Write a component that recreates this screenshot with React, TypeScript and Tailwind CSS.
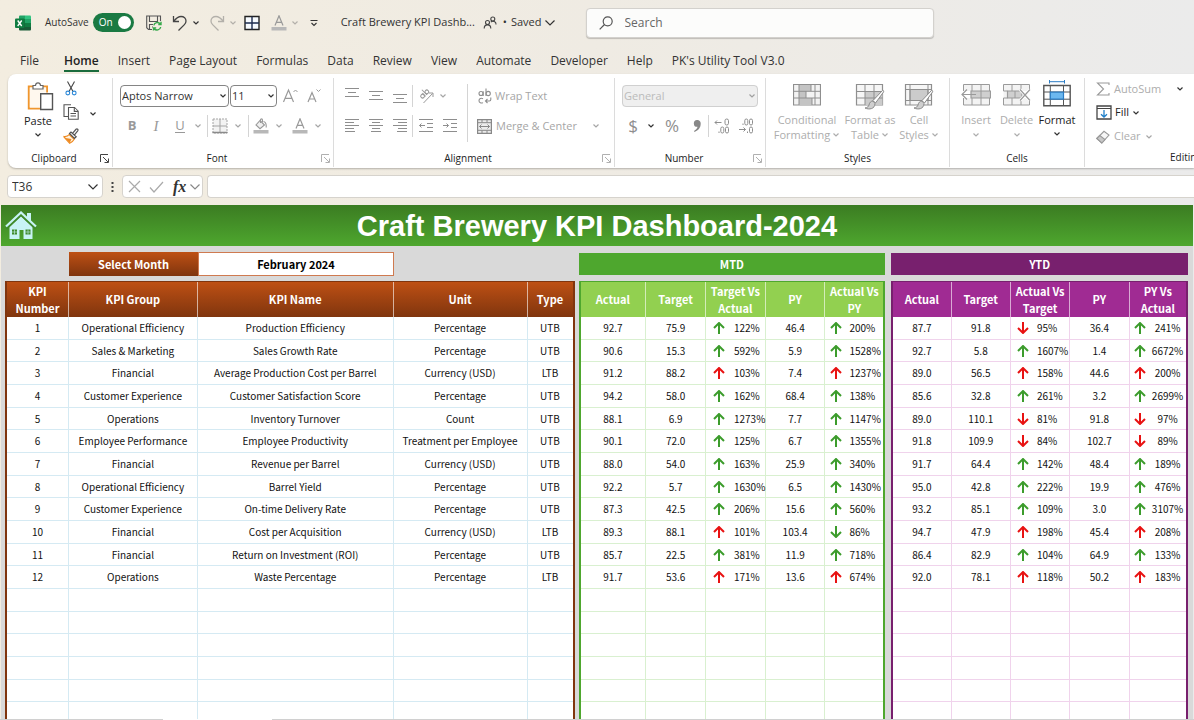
import React from 'react';

type Svg = { className?: string };

const Chevron = ({ className = 'text-[#333]' }: Svg) => (
  <svg viewBox="0 0 8 6" className={`h-[6px] w-[8px] shrink-0 ${className}`} fill="none" stroke="currentColor" strokeWidth="1.2">
    <path d="M1.5 1.5 4 4 6.5 1.5" />
  </svg>
);

const WideChevron = ({ className = 'text-[#333]' }: Svg) => (
  <svg viewBox="0 0 12 8" className={`h-[8px] w-[12px] shrink-0 ${className}`} fill="none" stroke="currentColor" strokeWidth="1.2">
    <path d="M1.5 1.5 6 6 10.5 1.5" />
  </svg>
);

const Divider = ({ className = 'h-[22px]' }: Svg) => <span className={`w-px shrink-0 bg-[#d4d4d4] ${className}`} />;

const Launcher = ({ className = 'text-[#b0b0b0]' }: Svg) => (
  <svg viewBox="0 0 9 9" className={`h-[9px] w-[9px] ${className}`} fill="none" stroke="currentColor" strokeWidth="1">
    <path d="M.5 8V.5H8M3 3l5 5M8.5 4.5v4h-4" />
  </svg>
);

/* ---------- icons ---------- */

const ExcelLogo = () => (
  <svg viewBox="0 0 16 16" className="h-[16px] w-[16px]">
    <path d="M5 .5h5V8H4V1.5a1 1 0 0 1 1-1z" fill="#21a366" />
    <path d="M10 .5h5a1 1 0 0 1 1 1V4h-6z" fill="#33c481" />
    <path d="M4 4h6v4H4z" fill="#107c41" />
    <path d="M10 4h6v4h-6z" fill="#21a366" />
    <path d="M4 8h6v4H4z" fill="#185c37" />
    <path d="M10 8h6v4h-6z" fill="#107c41" />
    <path d="M4 12h12v2.5a1 1 0 0 1-1 1H5a1 1 0 0 1-1-1z" fill="#185c37" />
    <rect x="0" y="3.5" width="9.5" height="9.5" rx="1" fill="#107c41" />
    <path d="m2.7 5.5 4 5.500M6.7 5.5l-4 5.5" stroke="#fff" strokeWidth="1.4" />
  </svg>
);

const SaveIcon = () => (
  <svg viewBox="0 0 16 16" className="h-[16px] w-[16px]" fill="none" strokeWidth="1.1">
    <path d="M6 14.5H2.5L.7 12.7V1h13.800v5M3.5 1v5.5h8V1M3.5 14.5v-5H7M6 12h1" stroke="#555" />
    <path d="M7.800 10.300a3.600 3.600 0 0 1 6.500-1.200M15 6.800v2.700h-2.700M14.700 12a3.600 3.600 0 0 1-6.500 1.500M7.500 15.500v-2.600h2.700" stroke="#35a84a" strokeWidth="1.4" />
  </svg>
);

const UndoIcon = ({ className }: Svg) => (
  <svg viewBox="0 0 16 16" className={`h-[16px] w-[16px] ${className}`} fill="none" stroke="currentColor" strokeWidth="1.3">
    <path d="M1.5 1v5.5H7M1.8 6.2C4 3.5 6 1.5 9 1.5c3 0 5 2 5 4.5 0 1.5-.6 2.6-1.6 3.600L6.500 15.500" />
  </svg>
);

const GridIcon = () => (
  <svg viewBox="0 0 16 16" className="h-[16px] w-[16px]" fill="none" stroke="#222" strokeWidth="1.4">
    <path d="M1 1.5h14v13H1z" fill="#f7fbff" />
    <path d="M8 1.5v13M1 8h14" stroke="#1d2c4f" />
  </svg>
);

const FontColorIcon = () => (
  <svg viewBox="0 0 16 16" className="h-[16px] w-[16px]" fill="none" stroke="#999" strokeWidth="1.2">
    <path d="M4 10.500 8 .8l4 9.700M5.300 7.300h5.400" />
    <path d="M.5 12h15v3.500H.5z" fill="#b8b8b8" stroke="none" />
  </svg>
);

const PeopleIcon = () => (
  <svg viewBox="0 0 14 14" className="h-[14px] w-[14px]" fill="none" stroke="#444" strokeWidth="1.1">
    <circle cx="4.5" cy="6.5" r="2" />
    <path d="M1.200 12.500c0-2.500 1.300-3.600 3.300-3.600s3.300 1.100 3.300 3.600" />
    <circle cx="9.8" cy="3" r="2" />
    <path d="M7.800 6.200c.6-.6 1.200-.9 2-.9 2 0 3.200 1.200 3.200 3.200" />
  </svg>
);

const SearchIcon = () => (
  <svg viewBox="0 0 14 14" className="h-[14px] w-[14px] shrink-0" fill="none" stroke="#555" strokeWidth="1.2">
    <circle cx="8.7" cy="5.3" r="4.5" />
    <path d="M5.500 8.500.7 13.300" />
  </svg>
);

const PasteIcon = () => (
  <svg viewBox="0 0 27 29" className="h-[29px] w-[27px]" fill="none">
    <path d="M7 4.500H1.800v22h11.500M14 4.500h6v6" stroke="#f0962d" strokeWidth="2" />
    <path d="M2.800 5.500h16.400v5h-6v15H2.800z" fill="#fff8ee" />
    <path d="M6 7V3.500h2.500C8.700 1.500 9.500.8 11 .8s2.300.7 2.500 2.700H16V7z" fill="#fff" stroke="#666" strokeWidth="1.2" />
    <path d="M13.700 11.700h11.800v15.800H13.700z" fill="#fff" stroke="#555" strokeWidth="1.4" />
  </svg>
);

const CutIcon = () => (
  <svg viewBox="0 0 14 15" className="h-[15px] w-[14px]" fill="none" strokeWidth="1.1">
    <path d="M3.500.5 9 10.500M10.500.5 5 10.500" stroke="#444" />
    <circle cx="3.8" cy="12" r="1.9" stroke="#2b88d8" />
    <circle cx="10.2" cy="12" r="1.9" stroke="#2b88d8" />
  </svg>
);

const CopyIcon = () => (
  <svg viewBox="0 0 16 16" className="h-[16px] w-[16px]" fill="#fff" stroke="#555" strokeWidth="1.1">
    <path d="M8 .8H1v11.700h4" />
    <path d="M5.500 3.500h6l3.700 3.700v8H5.500z" />
    <path d="M11.300 3.700v3.700H15M7.500 9.500h5.500M7.500 12h5.500" />
  </svg>
);

const PainterIcon = () => (
  <svg viewBox="0 0 16 16" className="h-[16px] w-[16px]" fill="none" strokeWidth="1.2">
    <path d="M1 8.500c2.500.3 4-.5 5.200-2l5 4.700c-1.200 2-2.400 3.300-4.500 4.100L1 9z" fill="#fff3e0" stroke="#ee8a22" />
    <path d="m2.500 10 6 1-1.800 4z" fill="#ee8a22" />
    <path d="m6.500 5.500 1.500-1.500 5.200 4.800-1.700 1.700zM9.500 5.300l3.500-4c1.300-1 2.500.4 1.700 1.500l-3.200 4" fill="#fff" stroke="#555" />
  </svg>
);

const GrowFont = ({ down = false }: { down?: boolean }) => (
  <svg viewBox="0 0 17 16" className="h-[16px] w-[17px]" fill="none" stroke="#9a9a9a" strokeWidth="1.2">
    <path d={down ? 'M2 14 6 4.500l4 9.500M3.400 11h5.300' : 'M1.500 14 6.500 2l5 12M3.200 10.300h6.600'} />
    <path d={down ? 'm10.500 1.500 2 2 2-2' : 'm11.500 4 2-2 2 2'} strokeWidth="1" />
  </svg>
);

const BorderIcon = () => (
  <svg viewBox="0 0 16 16" className="h-[16px] w-[16px]" fill="none" stroke="#a5a5a5">
    <path d="M1 1h14v14H1z" fill="#f3f3f3" strokeDasharray="2 1" />
    <path d="M8 1v13M1 8h14" />
    <path d="M.5 14.500h15" stroke="#8a8a8a" strokeWidth="1.5" />
  </svg>
);

const FillColorIcon = () => (
  <svg viewBox="0 0 16 16" className="h-[16px] w-[16px]" fill="none" stroke="#999" strokeWidth="1.1">
    <path d="m7 2.500 4.500 4.500-4.500 3.700L3 7z" fill="#f0f0f0" />
    <path d="M7.500 5V2c0-1.500 2-1.500 2 0v2M10.500 3.500c2.300.5 3 2.500 2.700 6" />
    <path d="M.5 12h15v3.500H.5z" fill="#b8b8b8" stroke="none" />
  </svg>
);

const Lines = ({ rows }: { rows: [number, number, number][] }) => (
  <svg viewBox="0 0 14 16" className="h-[16px] w-[14px]" stroke="#8e8e8e" strokeWidth="1">
    {rows.map(([y, a, b]) => (
      <path key={y} d={`M${a} ${y + 0.5}H${b}`} />
    ))}
  </svg>
);

const OrientIcon = () => (
  <svg viewBox="0 0 16 16" className="h-[16px] w-[16px]" fill="none" stroke="#999" strokeWidth="1">
    <path d="M5.500 15 14.500 5.500M11 5h4v4" />
    <g transform="rotate(-45 6 6)">
      <circle cx="3.5" cy="6.5" r="1.9" />
      <path d="M5.500 4.300v4.500M7.500 1.500v7.300" />
      <circle cx="9.5" cy="6.5" r="1.9" />
    </g>
  </svg>
);

const IndentIcon = ({ right = false }: { right?: boolean }) => (
  <svg viewBox="0 0 14 16" className="h-[16px] w-[14px]" fill="none" stroke="#8e8e8e" strokeWidth="1">
    <path d="M0 1.500h14M8 5.500h6M8 9.500h6M0 13.500h14" />
    <path d={right ? 'M0 7.500h5.500M3.500 5.500l2 2-2 2' : 'M.5 7.500H6M2.500 5.500l-2 2 2 2'} />
  </svg>
);

const WrapIcon = () => (
  <svg viewBox="0 0 14 16" className="h-[16px] w-[14px]" fill="none" stroke="#8e8e8e" strokeWidth="1.1">
    <circle cx="3" cy="5.5" r="2" />
    <path d="M5.200 3.300V8M8 .5V8" />
    <circle cx="10.2" cy="5.5" r="2.1" />
    <path d="M5 10.800c-1.800-1.200-4 0-4 1.900s2.200 3 4 1.900M12.800 9.500v2c0 1-.5 1.500-1.500 1.500H7.500M9.500 11l-2 2 2 2" />
  </svg>
);

const MergeIcon = () => (
  <svg viewBox="0 0 15 15" className="h-[15px] w-[15px]" fill="none" stroke="#888" strokeWidth="1.2">
    <path d="M.6.6h13.800v13.800H.6z" fill="#ececec" />
    <path d="M1 3.700h13M1 11.300h13M5 .5v3M10 .5v3M5 11.500v3M10 11.500v3" strokeWidth="1" />
    <path d="M2.500 7.500h10M4.500 5.500l-2 2 2 2M10.500 5.500l2 2-2 2" strokeWidth="1" />
  </svg>
);

const DecimalIcon = ({ more = false }: { more?: boolean }) => (
  <svg viewBox="0 0 16 16" className="h-[16px] w-[16px]" fill="none" stroke="#8e8e8e" strokeWidth="1">
    {more ? (
      <>
        <path d="M1 4.500h6.500M3 2.500l-2 2 2 2M5 13.500v1.500" />
        <rect x="11" y="1" width="3.5" height="6" rx="1.7" />
        <rect x="6.8" y="9" width="3" height="6" rx="1.5" />
        <rect x="11.5" y="9" width="3" height="6" rx="1.5" />
      </>
    ) : (
      <>
        <path d="M1 11.500h6.500M5.500 9.500l2 2-2 2M5 5.500V7" />
        <rect x="6.8" y="1" width="3" height="6" rx="1.5" />
        <rect x="11.5" y="1" width="3" height="6" rx="1.5" />
        <rect x="11.5" y="9" width="3" height="6" rx="1.5" />
        <path d="M9.500 13.500V15" />
      </>
    )}
  </svg>
);

const BrushStroke = () => (
  <>
    <path d="M27.500 6.500 18 16.500l2.500 2.500L28.500 8c.6-1-.2-2-1-1.500z" fill="#fff" stroke="#8a8a8a" />
    <path d="M18 17c-2 0-3.500 1.500-4 4-.3 1.500-1.500 2.500-4 3 4 2 10 1 10-4.500z" fill="#cfcfcf" stroke="#8a8a8a" />
  </>
);

const ConditionalIcon = () => (
  <svg viewBox="0 0 28 22" className="h-[22px] w-[28px]" fill="none" stroke="#8f8f8f">
    <path d="M.5.5h27v20.500H.5z" fill="#f3f3f3" strokeWidth="1.2" />
    <path d="M6 1h12v6H6zM6 7h7v7H6zM6 14h13v7H6z" fill="#c4c4c4" stroke="none" />
    <path d="M1 7.300h26M1 14h26M6 1v20M22 1v20M18 1v6M13 7v7M19 14v7" />
  </svg>
);

const FormatTableIcon = () => (
  <svg viewBox="0 0 30 26" className="h-[26px] w-[30px]" fill="none" stroke="#8f8f8f">
    <path d="M1.500.5h26v20.500h-26z" fill="#f6f6f6" strokeWidth="1.2" />
    <path d="M10 7.500h17.500V21H10z" fill="#cbcbcb" stroke="none" />
    <path d="M1.500 7.500h26M1.500 14h26M10 .5V21M19 .5V21" />
    <BrushStroke />
  </svg>
);

const CellStylesIcon = () => (
  <svg viewBox="0 0 30 26" className="h-[26px] w-[30px]" fill="none" stroke="#8f8f8f">
    <path d="M1.500.5h26v20.500h-26z" fill="#f6f6f6" strokeWidth="1.2" />
    <path d="M6 5.500h18v11H6z" fill="#cbcbcb" />
    <path d="M1.500 5.500h26M1.500 16.500h26M6 .5V21M24 .5V21" />
    <BrushStroke />
  </svg>
);

const InsertIcon = () => (
  <svg viewBox="0 0 30 22" className="h-[22px] w-[30px]" fill="none" stroke="#9a9a9a">
    <path d="M2.500 7V.5h26V7M2.500 14v7h26v-7M11 .5V7M20 .5V7M11 14v7M20 14v7" fill="#f3f3f3" />
    <path d="M10 7h19.500v7H10z" fill="#cfcfcf" strokeWidth="1.2" />
    <path d="M20 7v7" />
    <path d="M1 10.500h14M6 5.500l-5 5 5 5" strokeWidth="1.2" />
  </svg>
);

const DeleteIcon = () => (
  <svg viewBox="0 0 30 22" className="h-[22px] w-[30px]" fill="none" stroke="#9a9a9a">
    <path d="M1.500 7V.5h26V7M1.500 14v7h26v-7M10 .5V7M19 .5V7M10 14v7M19 14v7M1.500 7h4v7h-4" fill="#f3f3f3" />
    <path d="M5.500 7H20v7H5.500z" fill="#cfcfcf" strokeWidth="1.2" />
    <path d="M13 7v7" />
    <path d="m18 5.500 10 11M28 5.500l-10 11" stroke="#fff" strokeWidth="3" />
    <path d="m18 5.500 10 11M28 5.500l-10 11" strokeWidth="1.2" />
  </svg>
);

const FormatIcon = () => (
  <svg viewBox="0 0 28 27" className="h-[27px] w-[28px]" fill="none" stroke="#555">
    <path d="M6.500 0v3.500M21.500 0v3.500M6.500 1.700h15" stroke="#2b7cc4" />
    <path d="M.8 5.500h26.400v20.300H.8z" fill="#fff" strokeWidth="1.4" />
    <path d="M1 12h26M1 19.200h26M7.300 6v20M20.500 6v20" />
    <path d="M7.300 12.200h13.200v6.900H7.300z" fill="#6cb8f0" stroke="#2b7cc4" strokeWidth="1.2" />
  </svg>
);

const SumIcon = () => (
  <svg viewBox="0 0 14 14" className="h-[14px] w-[14px]" fill="none" stroke="#999" strokeWidth="1.1">
    <path d="M13 3V1H1.500l6 6-6 6H13v-2" />
  </svg>
);

const FillIcon = () => (
  <svg viewBox="0 0 16 15" className="h-[15px] w-[16px]" fill="none" stroke="#444" strokeWidth="1.3">
    <path d="M1 1h14v13H1z" />
    <path d="M1 3.500h14" strokeWidth="1" />
    <path d="M8 5v7M5 9.200 8 12l3-2.800" stroke="#1f7fc9" />
  </svg>
);

const ClearIcon = () => (
  <svg viewBox="0 0 14 14" className="h-[14px] w-[14px]" fill="none" stroke="#999" strokeWidth="1.1">
    <path d="M.8 8.500 8 1.300 13 5 5.800 13z" fill="#f6f6f6" />
    <path d="m.8 8.500 3-3L9 9.500 5.800 13z" fill="#c8c8c8" />
  </svg>
);

const HomeIcon = () => (
  <svg viewBox="0 0 32 29" className="h-[29px] w-[32px]">
    <path d="M26 2v10l-4-4V2z" fill="#c8f3f5" />
    <path d="M16 5 27.500 16v12h-9v-9h-4v9h-10V16z" fill="#c8f3f5" />
    <path d="M7 18.500h5v5H7zM20.500 18.500h5v5h-5z" fill="#3f8a2a" />
    <path d="M9.500 18.500v5M7 21h5M23 18.500v5M20.500 21h5" stroke="#c8f3f5" strokeWidth=".6" />
    <path d="M1 17.500 16 3.500l15 14" fill="none" stroke="#3f8a2a" strokeWidth="3" />
    <path d="M1 15.500 16 1.500l15 14" fill="none" stroke="#c8f3f5" strokeWidth="2.2" />
  </svg>
);

const TrendArrow = ({ down, bad }: { down: boolean; bad: boolean }) => (
  <svg
    viewBox="0 0 12 12"
    role="img"
    aria-label={down ? 'down' : 'up'}
    className={`h-[12px] w-[12px] shrink-0 ${bad ? 'text-[#e81212]' : 'text-[#3c9c2c]'}`}
    fill="none"
    stroke="currentColor"
    strokeWidth="2"
  >
    <path d={down ? 'M6 0v11M1 6l5 5 5-5' : 'M6 12V1M1 6l5-5 5 5'} />
  </svg>
);

/* ---------- ribbon ---------- */

const Group = ({
  label,
  width,
  launcher,
  children,
}: {
  label: string;
  width: string;
  launcher?: 'on' | 'off';
  children: React.ReactNode;
}) => (
  <section aria-label={label} className={`flex shrink-0 flex-col pt-1 ${width}`}>
    <div className="flex flex-1 flex-col border-r border-[#dcdcdc]">
      <div className="h-[71px]">{children}</div>
      <div className="flex h-[18px] items-center text-[10px] text-[#222]">
        <span className="flex-1 text-center">{label}</span>
        {launcher && (
          <button aria-label={`${label} settings`} className="mr-[3px]">
            <Launcher className={launcher === 'on' ? 'text-[#444]' : 'text-[#b0b0b0]'} />
          </button>
        )}
      </div>
    </div>
  </section>
);

const Combo = ({ label, value, box, arrow }: { label: string; value: string; box: string; arrow: string }) => (
  <div className={`relative h-[22px] ${box}`}>
    <select
      aria-label={label}
      defaultValue={value}
      className="block h-full w-full appearance-none rounded-[4px] border border-current/60 bg-transparent pl-px text-[11px]"
    >
      <option>{value}</option>
    </select>
    <span className="pointer-events-none absolute inset-y-0 right-[2px] flex items-center">
      <Chevron className={arrow} />
    </span>
  </div>
);

const IconButton = ({ label, w = 'w-[24px]', children }: { label: string; w?: string; children: React.ReactNode }) => (
  <button aria-label={label} className={`flex h-[24px] shrink-0 items-center justify-center ${w}`}>
    {children}
  </button>
);

const BigButton = ({
  icon,
  lines,
  w,
  on = false,
  inline = false,
}: {
  icon: React.ReactNode;
  lines: string[];
  w: string;
  on?: boolean;
  inline?: boolean;
}) => (
  <button className={`flex h-full flex-col items-center text-[11px] ${w} ${on ? 'text-[#222]' : 'text-[#adadad]'}`}>
    <span className={`flex h-[33px] justify-center ${on ? 'pt-[2px]' : 'pt-[6px]'}`}>{icon}</span>
    {inline ? (
      <>
        <span className="mt-px leading-[15px]">{lines[0]}</span>
        <span className="flex items-center gap-[2px] leading-[15px] whitespace-nowrap">
          {lines[1]}
          <Chevron className="text-[#adadad]" />
        </span>
      </>
    ) : (
      <>
        <span className="mt-px leading-[16px]">{lines[0]}</span>
        <Chevron className={on ? 'mt-[3px] text-[#333]' : 'mt-[4px] text-[#adadad]'} />
      </>
    )}
  </button>
);

const pale = 'text-[#a6a6a6]';

const Ribbon = () => (
  <div className="ml-2 flex h-[94px] overflow-hidden rounded-l-[8px] bg-white pb-[2px] shadow-[0_1px_2px_rgba(0,0,0,0.25)]">
    <Group label="Clipboard" width="w-[105px]" launcher="on">
      <div className="flex h-full">
        <button className="ml-[12px] flex w-[36px] flex-col items-center pt-[4px] text-[11px] text-[#222]">
          <span className="pl-[5px]">
            <PasteIcon />
          </span>
          <span className="mt-[2px] leading-[16px]">Paste</span>
          <Chevron className="mt-[3px] text-[#333]" />
        </button>
        <div className="ml-[7px] flex flex-col gap-[8px] pt-[3px]">
          <button aria-label="Cut" className="flex w-[16px] justify-center">
            <CutIcon />
          </button>
          <button aria-label="Copy">
            <CopyIcon />
          </button>
          <button aria-label="Format Painter">
            <PainterIcon />
          </button>
        </div>
        <button aria-label="Copy options" className="ml-[10px] self-center">
          <Chevron />
        </button>
      </div>
    </Group>

    <Group label="Font" width="w-[221px]" launcher="off">
      <div className="flex h-full flex-col gap-[6px] pt-[6px] pl-[7px]">
        <div className="flex h-[24px] items-center">
          <Combo label="Font name" value="Aptos Narrow" box="w-[109px] text-[#333]" arrow="text-[#333]" />
          <Combo label="Font size" value="11" box="ml-px w-[47px] text-[#333]" arrow="text-[#333]" />
          <IconButton label="Increase font size" w="ml-px w-[24px]">
            <GrowFont />
          </IconButton>
          <IconButton label="Decrease font size">
            <GrowFont down />
          </IconButton>
        </div>
        <div className="flex h-[24px] items-center text-[13px] text-[#999]">
          <IconButton label="Bold">
            <b>B</b>
          </IconButton>
          <IconButton label="Italic">
            <i className="font-['Liberation_Serif',serif] text-[15px]">I</i>
          </IconButton>
          <IconButton label="Underline">
            <span className="border-b border-[#999] leading-[13px]">U</span>
          </IconButton>
          <IconButton label="Underline style" w="w-[12px]">
            <Chevron className={pale} />
          </IconButton>
          <Divider className="ml-[3px] h-[22px]" />
          <IconButton label="Borders">
            <BorderIcon />
          </IconButton>
          <IconButton label="Border style" w="w-[12px]">
            <Chevron className={pale} />
          </IconButton>
          <Divider className="ml-[4px] h-[22px]" />
          <IconButton label="Fill colour">
            <FillColorIcon />
          </IconButton>
          <IconButton label="Fill colour options" w="w-[12px]">
            <Chevron className={pale} />
          </IconButton>
          <IconButton label="Font colour" w="ml-[3px] w-[24px]">
            <FontColorIcon />
          </IconButton>
          <IconButton label="Font colour options" w="w-[12px]">
            <Chevron className={pale} />
          </IconButton>
        </div>
      </div>
    </Group>

    <Group label="Alignment" width="w-[281px]" launcher="off">
      <div className={`flex h-full text-[11px] ${pale}`}>
        <div className="flex flex-col gap-[6px] pt-[6px] pl-[6px]">
          <div className="flex h-[24px] items-center">
            <IconButton label="Top align">
              <Lines rows={[[0, 0, 14], [4, 3, 11], [8, 0, 14]]} />
            </IconButton>
            <IconButton label="Middle align">
              <Lines rows={[[3, 0, 14], [7, 3, 11], [11, 0, 14]]} />
            </IconButton>
            <IconButton label="Bottom align">
              <Lines rows={[[6, 0, 14], [10, 3, 11], [14, 0, 14]]} />
            </IconButton>
            <Divider />
            <IconButton label="Orientation" w="ml-px w-[24px]">
              <OrientIcon />
            </IconButton>
            <IconButton label="Orientation options" w="w-[10px]">
              <Chevron className={pale} />
            </IconButton>
          </div>
          <div className="flex h-[24px] items-center">
            <IconButton label="Align left">
              <Lines rows={[[1, 0, 14], [4, 0, 9], [7, 0, 14], [10, 0, 9], [13, 0, 10]]} />
            </IconButton>
            <IconButton label="Center">
              <Lines rows={[[1, 0, 14], [4, 3, 11], [7, 0, 14], [10, 3, 11], [13, 2, 12]]} />
            </IconButton>
            <IconButton label="Align right">
              <Lines rows={[[1, 0, 14], [4, 5, 14], [7, 0, 14], [10, 5, 14], [13, 4, 14]]} />
            </IconButton>
            <Divider />
            <IconButton label="Decrease indent" w="ml-px w-[24px]">
              <IndentIcon />
            </IconButton>
            <IconButton label="Increase indent">
              <IndentIcon right />
            </IconButton>
          </div>
        </div>
        <Divider className="mt-[6px] ml-[5px] h-[58px]" />
        <div className="flex flex-1 flex-col gap-[6px] pt-[6px] pl-[9px]">
          <button className="flex h-[24px] items-center gap-[3px] pl-px">
            <WrapIcon />
            Wrap Text
          </button>
          <div className="flex h-[24px] items-center justify-between pr-[14px]">
            <button className="flex items-center gap-[4px] whitespace-nowrap">
              <MergeIcon />
              Merge &amp; Center
            </button>
            <button aria-label="Merge options">
              <Chevron className={pale} />
            </button>
          </div>
        </div>
      </div>
    </Group>

    <Group label="Number" width="w-[151px]" launcher="off">
      <div className="flex h-full flex-col gap-[6px] pt-[6px] pl-[7px]">
        <div className="flex h-[24px] items-center">
          <Combo
            label="Number format"
            value="General"
            box="w-[136px] rounded-[4px] bg-[#efefef] text-[#bbb]"
            arrow="text-[#a0a0a0]"
          />
        </div>
        <div className="flex h-[24px] items-center text-[17px] text-[#8e8e8e]">
          <IconButton label="Currency" w="w-[22px]">
            $
          </IconButton>
          <IconButton label="Currency options" w="w-[14px]">
            <Chevron />
          </IconButton>
          <IconButton label="Percent" w="w-[28px]">
            %
          </IconButton>
          <IconButton label="Comma style" w="w-[22px]">
            <svg viewBox="0 0 8 12" className="h-[12px] w-[8px]" fill="#888">
              <path d="M4 0a3.500 3.500 0 0 1 3.700 3.800C7.700 7.500 5.500 10.500 1.500 12L1 11c2-1 3.300-2.500 3.500-4.200A3.400 3.400 0 1 1 4 0z" />
            </svg>
          </IconButton>
          <Divider />
          <IconButton label="Increase decimal" w="ml-px w-[24px]">
            <DecimalIcon more />
          </IconButton>
          <IconButton label="Decrease decimal">
            <DecimalIcon />
          </IconButton>
        </div>
      </div>
    </Group>

    <Group label="Styles" width="w-[184px]">
      <div className="flex h-full pl-[6px]">
        <BigButton w="w-[70px]" inline icon={<ConditionalIcon />} lines={['Conditional', 'Formatting']} />
        <BigButton w="w-[56px]" inline icon={<FormatTableIcon />} lines={['Format as', 'Table']} />
        <BigButton w="w-[42px]" inline icon={<CellStylesIcon />} lines={['Cell', 'Styles']} />
      </div>
    </Group>

    <Group label="Cells" width="w-[135px]">
      <div className="flex h-full pl-[6px]">
        <BigButton w="w-[40px]" icon={<InsertIcon />} lines={['Insert']} />
        <BigButton w="w-[41px]" icon={<DeleteIcon />} lines={['Delete']} />
        <BigButton w="w-[40px]" on icon={<FormatIcon />} lines={['Format']} />
      </div>
    </Group>

    <section aria-label="Editing" className="flex min-w-0 flex-1 flex-col overflow-hidden pt-1 text-[11px]">
      <div className="flex h-[71px] flex-col pl-[11px]">
        <div className="flex h-[22px] items-center justify-between pr-[10px] text-[#adadad]">
          <button className="flex items-center gap-[4px]">
            <SumIcon />
            AutoSum
          </button>
          <button aria-label="AutoSum options">
            <Chevron />
          </button>
        </div>
        <button className="flex h-[25px] items-center gap-[3px] text-[#222]">
          <FillIcon />
          Fill
          <Chevron />
        </button>
        <button className="flex h-[23px] items-center gap-[4px] text-[#adadad]">
          <ClearIcon />
          Clear
          <Chevron className={pale} />
        </button>
      </div>
      <div className="flex h-[18px] items-center pl-[85px] text-[10px] whitespace-nowrap text-[#222]">Editing</div>
    </section>
  </div>
);

/* ---------- title bar, tabs, formula bar ---------- */

const TitleBar = () => (
  <header className="flex h-[45px] items-center pl-[15px] text-[11px] text-[#333]">
    <ExcelLogo />
    <label className="ml-[14px] flex items-center gap-[4px] text-[10px]">
      AutoSave
      <span className="relative flex h-[19px] w-[41px] items-center justify-between rounded-full bg-[#1a7a43] pr-[3px] pl-[6px] text-white">
        <input type="checkbox" role="switch" defaultChecked className="absolute inset-0 m-0 opacity-0" />
        On
        <span className="h-[13px] w-[13px] rounded-full bg-white" />
      </span>
    </label>
    <button aria-label="Save" className="ml-[12px]">
      <SaveIcon />
    </button>
    <button aria-label="Undo" className="ml-[10px]">
      <UndoIcon className="text-[#444]" />
    </button>
    <button aria-label="Undo history" className="ml-[4px]">
      <Chevron />
    </button>
    <button aria-label="Redo" className="ml-[9px]">
      <UndoIcon className="-scale-x-100 text-[#b3b0aa]" />
    </button>
    <button aria-label="Redo history" className="ml-[4px]">
      <Chevron className="text-[#b3b0aa]" />
    </button>
    <button aria-label="Borders" className="ml-[7px]">
      <GridIcon />
    </button>
    <button aria-label="Font colour" className="ml-[11px]">
      <FontColorIcon />
    </button>
    <button aria-label="Font colour options" className="ml-[4px]">
      <Chevron className="text-[#b3b0aa]" />
    </button>
    <button aria-label="Customize toolbar" className="ml-[11px]">
      <svg viewBox="0 0 8 8" className="h-[8px] w-[8px]" fill="none" stroke="#333" strokeWidth="1.1">
        <path d="M.5 1.500h7M1.500 4 4 6.500 6.500 4" />
      </svg>
    </button>
    <span className="ml-[23px] whitespace-nowrap">Craft Brewery KPI Dashb...</span>
    <span className="ml-[8px]">
      <PeopleIcon />
    </span>
    <button className="ml-[6px] flex items-center gap-[4px]">
      <span>•</span>
      Saved
      <WideChevron className="-ml-[2px] text-[#333]" />
    </button>
    <label className="ml-[30px] flex h-[30px] w-[348px] items-center gap-[12px] rounded-[4px] border border-[#d3d1cd] bg-[#fcfcfb] px-[12px] shadow-[0_1px_1px_rgba(0,0,0,0.2)]">
      <SearchIcon />
      <input
        aria-label="Search"
        placeholder="Search"
        className="w-full bg-transparent text-[12px] outline-none placeholder:text-[#666]"
      />
    </label>
  </header>
);

const tabs = [
  'File', 'Home', 'Insert', 'Page Layout', 'Formulas', 'Data', 'Review', 'View', 'Automate', 'Developer', 'Help',
  "PK's Utility Tool V3.0",
];

const Tabs = () => (
  <nav className="flex h-[29px] items-start gap-[19px] pt-[6px] pl-[20px] text-[12px] whitespace-nowrap text-[#333]">
    {tabs.map((t) => (
      <a
        key={t}
        href="#"
        className={
          t === 'Home'
            ? 'ml-[6px] border-b-2 border-[#1a6b3c] leading-[19px] font-semibold text-[#222]'
            : 'leading-[19px]'
        }
      >
        {t}
      </a>
    ))}
  </nav>
);

const FormulaBar = () => (
  <div className="flex items-center py-[7px] pl-[7px]">
    <div className="relative h-[23px] w-[96px] rounded-[4px] border border-[#d6d3cd] bg-white">
      <input
        aria-label="Name box"
        defaultValue="T36"
        className="block h-full w-full bg-transparent pl-[4px] text-[12px] text-[#333] outline-none"
      />
      <span className="pointer-events-none absolute inset-y-0 right-[3px] flex items-center">
        <WideChevron />
      </span>
    </div>
    <svg viewBox="0 0 3 12" className="mx-[8px] h-[12px] w-[3px]" fill="#444">
      <path d="M.5 1h2v2h-2zM.5 5h2v2h-2zM.5 9h2v2h-2z" />
    </svg>
    <div className="flex h-[23px] w-[81px] items-center rounded-[4px] border border-[#d6d3cd] bg-white pl-[5px]">
      <button aria-label="Cancel">
        <svg viewBox="0 0 13 13" className="h-[13px] w-[13px]" fill="none" stroke="#aaa" strokeWidth="1.2">
          <path d="m1 1 11 11M12 1 1 12" />
        </svg>
      </button>
      <button aria-label="Enter" className="ml-[8px]">
        <svg viewBox="0 0 15 12" className="h-[12px] w-[15px]" fill="none" stroke="#aaa" strokeWidth="1.2">
          <path d="m1 6.500 4 4.500L14 1" />
        </svg>
      </button>
      <button
        aria-label="Insert function"
        className="ml-[9px] font-['Liberation_Serif',serif] text-[16px] leading-[20px] font-bold text-[#333] italic"
      >
        fx
      </button>
      <button aria-label="Function options" className="ml-[3px]">
        <WideChevron className="text-[#888]" />
      </button>
    </div>
    <input
      aria-label="Formula"
      className="ml-[4px] h-[23px] min-w-0 flex-1 rounded-l-[4px] border border-r-0 border-[#d6d3cd] bg-white px-2 text-[12px] outline-none"
    />
  </div>
);

/* ---------- sheet ---------- */

type Pct = [value: string, down?: boolean, bad?: boolean];
type Row = { info: string[]; mtd: [string, string, Pct, string, Pct]; ytd: [string, string, Pct, string, Pct] };

const U = false;
const D = true;
const B = true;

const rows: Row[] = [
  { info: ['1', 'Operational Efficiency', 'Production Efficiency', 'Percentage', 'UTB'], mtd: ['92.7', '75.9', ['122%'], '46.4', ['200%']], ytd: ['87.7', '91.8', ['95%', D, B], '36.4', ['241%']] },
  { info: ['2', 'Sales & Marketing', 'Sales Growth Rate', 'Percentage', 'UTB'], mtd: ['90.6', '15.3', ['592%'], '5.9', ['1528%']], ytd: ['92.7', '5.8', ['1607%'], '1.4', ['6672%']] },
  { info: ['3', 'Financial', 'Average Production Cost per Barrel', 'Currency (USD)', 'LTB'], mtd: ['91.2', '88.2', ['103%', U, B], '7.4', ['1237%', U, B]], ytd: ['89.0', '56.5', ['158%', U, B], '44.6', ['200%', U, B]] },
  { info: ['4', 'Customer Experience', 'Customer Satisfaction Score', 'Percentage', 'UTB'], mtd: ['94.2', '58.0', ['162%'], '68.4', ['138%']], ytd: ['85.6', '32.8', ['261%'], '3.2', ['2699%']] },
  { info: ['5', 'Operations', 'Inventory Turnover', 'Count', 'UTB'], mtd: ['88.1', '6.9', ['1273%'], '7.7', ['1147%']], ytd: ['89.0', '110.1', ['81%', D, B], '91.8', ['97%', D, B]] },
  { info: ['6', 'Employee Performance', 'Employee Productivity', 'Treatment per Employee', 'UTB'], mtd: ['90.1', '72.0', ['125%'], '6.7', ['1355%']], ytd: ['91.8', '109.9', ['84%', D, B], '102.7', ['89%', D, B]] },
  { info: ['7', 'Financial', 'Revenue per Barrel', 'Currency (USD)', 'UTB'], mtd: ['88.0', '54.0', ['163%'], '25.9', ['340%']], ytd: ['91.7', '64.4', ['142%'], '48.4', ['189%']] },
  { info: ['8', 'Operational Efficiency', 'Barrel Yield', 'Percentage', 'UTB'], mtd: ['92.2', '5.7', ['1630%'], '6.5', ['1430%']], ytd: ['95.0', '42.8', ['222%'], '19.9', ['476%']] },
  { info: ['9', 'Customer Experience', 'On-time Delivery Rate', 'Percentage', 'UTB'], mtd: ['87.3', '42.5', ['206%'], '15.6', ['560%']], ytd: ['93.2', '85.1', ['109%'], '3.0', ['3107%']] },
  { info: ['10', 'Financial', 'Cost per Acquisition', 'Currency (USD)', 'LTB'], mtd: ['89.3', '88.1', ['101%', U, B], '103.4', ['86%', D]], ytd: ['94.7', '47.9', ['198%', U, B], '45.4', ['208%', U, B]] },
  { info: ['11', 'Financial', 'Return on Investment (ROI)', 'Percentage', 'UTB'], mtd: ['85.7', '22.5', ['381%'], '11.9', ['718%']], ytd: ['86.4', '82.9', ['104%'], '64.9', ['133%']] },
  { info: ['12', 'Operations', 'Waste Percentage', 'Percentage', 'LTB'], mtd: ['91.7', '53.6', ['171%', U, B], '13.6', ['674%', U, B]], ytd: ['92.0', '78.1', ['118%', U, B], '50.2', ['183%', U, B]] },
];

const blankRows = 6;

const KpiTable = ({
  label,
  heads,
  widths,
  data,
  frame,
  head,
  line,
  arrowGap = [],
}: {
  label: string;
  heads: string[];
  widths: number[];
  data: (string | Pct)[][];
  frame: string;
  head: string;
  line: string;
  arrowGap?: string[];
}) => {
  const total = widths.reduce((a, b) => a + b, 0);
  return (
    <table
      aria-label={label}
      className={`w-full table-fixed border-separate border-spacing-0 border-x-2 border-t bg-white text-center ${frame}`}
    >
      <colgroup>
        {widths.map((w, i) => (
          <col key={i} style={{ width: `${(w / total) * 100}%` }} />
        ))}
      </colgroup>
      <thead>
        <tr className={`h-[35px] text-[11px] leading-[17px] font-bold text-white ${head}`}>
          {heads.map((h, i) => (
            <th key={i} className="border-r border-white/60 p-0 last:border-r-0">
              {h}
            </th>
          ))}
        </tr>
      </thead>
      <tbody>
        {[...data, ...Array.from({ length: blankRows }, () => heads.map(() => ''))].map((r, i) => (
          <tr key={i} className="h-[23px] text-[10px] leading-[16px] text-[#111] nth-[3n+2]:h-[22px]">
            {r.map((c, j) => (
              <td key={j} className={`border-r border-b p-0 whitespace-nowrap last:border-r-0 ${line}`}>
                {typeof c === 'string' ? (
                  c
                ) : (
                  <span className={`flex items-center ${arrowGap[j]}`}>
                    <TrendArrow down={!!c[1]} bad={!!c[2]} />
                    <span className={label === 'YTD' && j === 4 ? 'w-[34px] text-center' : ''}>{c[0]}</span>
                  </span>
                )}
              </td>
            ))}
          </tr>
        ))}
      </tbody>
    </table>
  );
};

const Sheet = () => (
  <main className="mx-px min-h-0 flex-1 overflow-hidden bg-[#d9d9d9] font-['Noto_Sans_CJK_SC',sans-serif]">
    <div className="flex h-[41px] items-center bg-linear-to-b from-[#3b7c22] to-[#4ea72e] pl-[4px]">
      <a href="#" aria-label="Home">
        <HomeIcon />
      </a>
      <h1 className="flex-1 pr-[36px] text-center font-['Liberation_Sans',sans-serif] text-[29px] leading-[36px] font-bold text-white">
        Craft Brewery KPI Dashboard-2024
      </h1>
    </div>
    <div className="grid grid-cols-[570fr_307fr_299fr] gap-x-[4px] pt-[6px] pr-[5px] pl-[4px] text-[11px] leading-[16px] font-bold">
      <div className="flex h-[24px] pl-[64px]">
        <label htmlFor="month" className="flex w-[129px] items-center justify-center bg-linear-to-b from-[#be5014] to-[#80350e] text-white">
          Select Month
        </label>
        <select
          id="month"
          defaultValue="February 2024"
          className="w-[196px] appearance-none border border-[#cf7a50] bg-white text-center text-black [text-align-last:center]"
        >
          <option>February 2024</option>
        </select>
      </div>
      <div className="mt-px flex h-[22px] items-center justify-center bg-[#4ea72e] text-white">MTD</div>
      <div className="mt-px ml-[2px] flex h-[22px] items-center justify-center bg-[#78206e] text-white">YTD</div>
    </div>
    <div className="grid grid-cols-[570fr_307fr_299fr] items-start gap-x-[4px] pt-[5px] pr-[5px] pl-[4px]">
      <KpiTable
        label="KPI"
        heads={['KPI Number', 'KPI Group', 'KPI Name', 'Unit', 'Type']}
        widths={[62, 129, 196, 134, 45]}
        data={rows.map((r) => r.info)}
        frame="border-[#80350e]"
        head="bg-linear-to-b from-[#be5014] to-[#80350e]"
        line="border-[#d5eaf3]"
      />
      <KpiTable
        label="MTD"
        heads={['Actual', 'Target', 'Target Vs Actual', 'PY', 'Actual Vs PY']}
        widths={[66, 60, 60, 60, 58]}
        data={rows.map((r) => r.mtd)}
        frame="border-[#4ea72e]"
        head="bg-[#92d050]"
        line="border-[#d9f0d0]"
        arrowGap={['', '', 'pl-[7px] gap-[9px]', '', 'pl-[5px] gap-[7px]']}
      />
      <div className="ml-[2px]">
        <KpiTable
          label="YTD"
          heads={['Actual', 'Target', 'Actual Vs Target', 'PY', 'PY Vs Actual']}
          widths={[59, 60, 60, 60, 57]}
          data={rows.map((r) => r.ytd)}
          frame="border-[#78206e]"
          head="bg-[#a02b93]"
          line="border-[#f0d3ec]"
          arrowGap={['', '', 'pl-[6px] gap-[8px]', '', 'pl-[4px] gap-[5px]']}
        />
      </div>
    </div>
  </main>
);

export default function App() {
  return (
    <div className="flex h-screen flex-col overflow-hidden bg-linear-to-r from-[#f3ede0] via-[#efebe3] to-[#ebebeb] font-['Open_Sans',sans-serif]">
      <TitleBar />
      <Tabs />
      <Ribbon />
      <FormulaBar />
      <Sheet />
      <footer className="flex h-px bg-[#d0d0d0]">
        <span className="ml-[163px] w-[109px] bg-white" />
      </footer>
    </div>
  );
}
